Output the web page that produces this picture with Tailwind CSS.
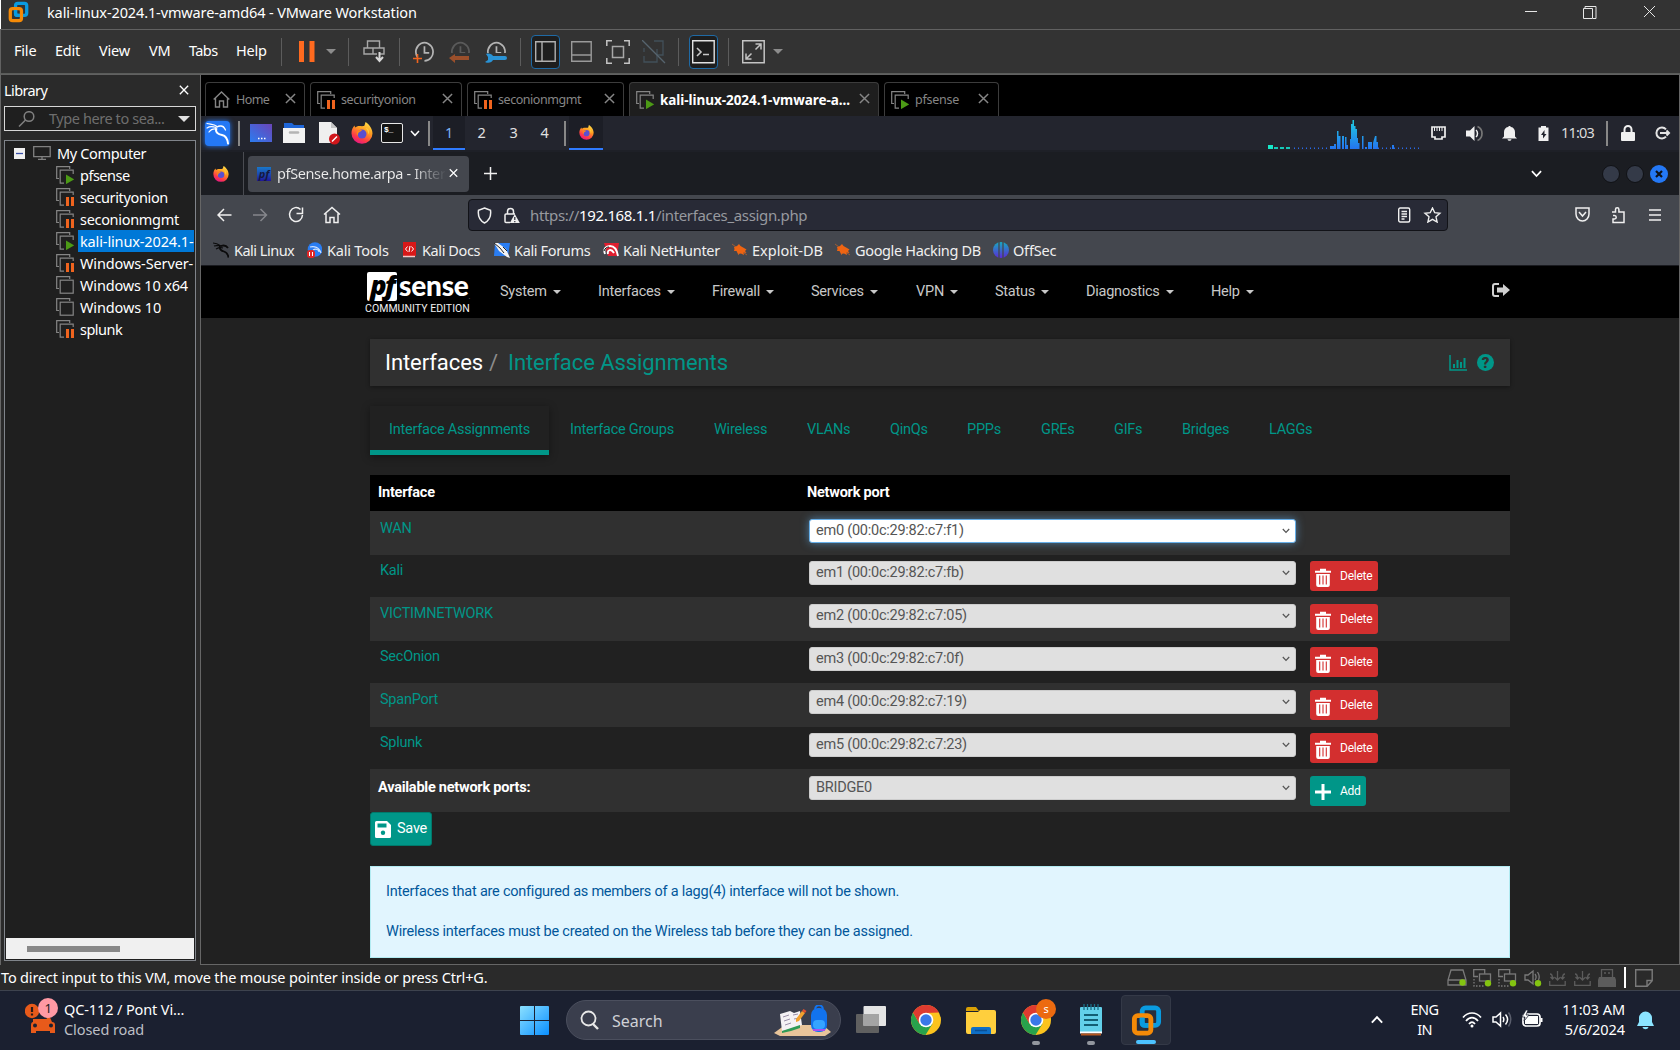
<!DOCTYPE html>
<html lang="en">
<head>
<meta charset="utf-8">
<title>kali-linux-2024.1-vmware-amd64 - VMware Workstation</title>
<script src="https://cdn.jsdelivr.net/npm/@tailwindcss/browser@4"></script>
</head>
<body class="h-[1050px] w-[1680px] overflow-hidden whitespace-nowrap bg-[#2a2a2a] font-['Noto_Sans',sans-serif] text-[14.5px] tracking-[-0.2px] text-white">

<!-- shared symbols -->
<svg class="absolute h-0 w-0">
  <defs>
    <linearGradient id="ffg" x1="0.8" y1="0" x2="0.3" y2="1"><stop offset="0" stop-color="#ffe34a"/><stop offset=".4" stop-color="#ff9a1f"/><stop offset=".75" stop-color="#ff3b47"/><stop offset="1" stop-color="#e31587"/></linearGradient>
    <linearGradient id="wing" x1="0" y1="0" x2="1" y2="1"><stop offset="0" stop-color="#8be0ff"/><stop offset="1" stop-color="#0a8fff"/></linearGradient>
    <linearGradient id="cpu" gradientUnits="userSpaceOnUse" x1="0" y1="2" x2="0" y2="32"><stop offset="0" stop-color="#1fd0e0"/><stop offset="1" stop-color="#2474f0"/></linearGradient>
    <linearGradient id="desk" x1="0" y1="1" x2="1" y2="0"><stop offset="0" stop-color="#2b7cf0"/><stop offset="1" stop-color="#6b45b8"/></linearGradient>
    <linearGradient id="off" x1="0" y1="0" x2="0" y2="1"><stop offset="0" stop-color="#18a9c0"/><stop offset="1" stop-color="#5a2bd6"/></linearGradient>
  </defs>
  <symbol id="vm-off" viewBox="0 0 18 18"><path d="M3 12.5H.7V.7h13V3" fill="none" stroke="#858585" stroke-width="1.2"/><rect x="4.2" y="4.2" width="13" height="13" fill="none" stroke="#858585" stroke-width="1.2"/></symbol>
  <symbol id="vm-pause" viewBox="0 0 18 18"><path d="M3 12.5H.7V.7h13V3M8 17.2H4.2v-13h13V7" fill="none" stroke="#858585" stroke-width="1.2"/><path d="M10 9h3v9h-3zM15 9h3v9h-3z" fill="#f0641e"/></symbol>
  <symbol id="vm-run" viewBox="0 0 18 18"><path d="M3 12.5H.7V.7h13V3M8 17.2H4.2v-13h13V8" fill="none" stroke="#858585" stroke-width="1.2"/><path d="M10 8.5l8.3 4.8-8.3 4.8z" fill="#4c9a16"/></symbol>
  <symbol id="firefox" viewBox="0 0 22 22"><path d="M14.5 0c3 2 7 6 7 11.5a10.5 10.3 0 0 1-21 0C.4 8 1.800 5 3.600 3.500L4 5.500c1-.8 3-1.500 4-1.500 1.500 0 5 .5 5.500-.5.5-1.200.5-2.300 1-3.500z" fill="url(#ffg)"/><circle cx="11" cy="12" r="4.500" fill="#5b4fd0"/><path d="M6 10c1-2 4-2 5-2-1 1.500-2 1.500-3.500 2.800C7 12 6.500 13 7 14c-1.500-1-1.500-3-1-4z" fill="#ff8a16"/><path d="M14.500 6c2 1.500 3 4 2.600 6.500 1-1 1.200-3 .5-4.500-.7-1.200-1.800-1.800-3.100-2z" fill="#ffd23a"/></symbol>
  <symbol id="vmw" viewBox="0 0 32 32"><rect x="11.500" y="3" width="17" height="18" rx="3.500" fill="none" stroke="#0a9be0" stroke-width="5"/><rect x="3.500" y="11" width="17" height="18" rx="3.500" fill="none" stroke="#f58a07" stroke-width="5"/><path d="M11.500 13v6a2 2 0 0 0 2 2h4" fill="none" stroke="#0a9be0" stroke-width="5"/></symbol>
  <symbol id="x" viewBox="0 0 12 12"><path d="M1 1l10 10M11 1L1 11" fill="none" stroke="currentColor" stroke-width="1.600"/></symbol>
  <symbol id="clock" viewBox="0 0 22 22"><path d="M4.800 16.500A9 9.500 0 1 1 12 20.300" fill="none" stroke="#b4b4b4" stroke-width="1.800"/><path d="M12 5v7h5" fill="none" stroke="#b4b4b4" stroke-width="1.800"/></symbol>
  <symbol id="net" viewBox="0 0 19 18"><path d="M5 7.500H.7V.7h11v4" fill="none" stroke="#7a7a7a" stroke-width="1.300"/><rect x="6.500" y="5" width="11" height="7" fill="none" stroke="#7a7a7a" stroke-width="1.300"/><path d="M1 10v7h11" fill="none" stroke="#7a7a7a" stroke-width="1.300" stroke-dasharray="1.500 1.500"/><circle cx="15" cy="14.300" r="3.200" fill="#84c411"/></symbol>
  <symbol id="dl" viewBox="0 0 17 16"><path d="M.7 11v4.300h15.500V11M8.500 1v9M6 7.500l2.500 2.500L11 7.500M1 4c2 0 2.500 1.500 2.500 4.500M16 4c-2 0-2.500 1.500-2.500 4.500M1.500 7l2 2 2-2M11.500 7l2 2 2-2" fill="none" stroke="#5c5c5c" stroke-width="1.300"/></symbol>
  <symbol id="chrome" viewBox="0 0 30 30"><circle cx="15" cy="15" r="15" fill="#fcc31e"/><path d="M2 7.500A15 15 0 0 0 14.500 30L21.500 18.800 15 15 8.500 18.700z" fill="#28a24c"/><path d="M2 7.500A15 15 0 0 1 28 7.500L15 8l-6.500 10.700z" fill="#de3b30"/><circle cx="15" cy="15" r="7.300" fill="#fff"/><circle cx="15" cy="15" r="5.700" fill="#3a78e8"/></symbol>
  <symbol id="caret" viewBox="0 0 10 5"><path d="M0 0h10L5 5z" fill="currentColor"/></symbol>
  <symbol id="chev" viewBox="0 0 10 7"><path d="M1 1l4 4.300L9 1" fill="none" stroke="currentColor" stroke-width="1.500"/></symbol>
  <symbol id="trash" viewBox="0 0 16 19"><path d="M0 2.800h5V.8h6v2h5v2H0zM1.200 6h13.600v11a2 2 0 0 1-2 2H3.200a2 2 0 0 1-2-2z" fill="#fff"/><path d="M4.700 7.500v9M8 7.500v9M11.300 7.500v9" stroke="#d32f2f" stroke-width="1.100"/></symbol>
  <symbol id="bug" viewBox="0 0 16 14"><path d="M2 4l3-1 2-2 1.500 2 3.500 2 2.500 1.500-1.500 1.500 1.500 2-3-.5.500 2.500-3-1.500-3 .5-1.500-3-2.500 0 .5-2z" fill="#ee6412"/><path d="M0 1l4 3M6 12l2-2M15 12l-3-2" stroke="#b5622e" stroke-width=".8"/></symbol>
</svg>

<div class="flex h-[1050px] flex-col *:shrink-0">

  <!-- title bar -->
  <header class="flex h-[29px] items-start border-l border-white bg-[#333333] pl-[7px] *:shrink-0">
    <svg class="mt-[1px] mr-[18px] h-[22px] w-[21px]"><use href="#vmw"/></svg>
    <div class="w-[1478px] leading-[25px] tracking-[-0.120px]">kali-linux-2024.1-vmware-amd64 - VMware Workstation</div>
    <svg class="mt-[5px] h-[14px] w-[132px]" viewBox="0 0 132 14" fill="none" stroke="#e6e6e6"><path d="M0 6.500h12M60 3.500V1.500h11v12h-3M58.500 3.500h9v10h-9zM119 1l11 11M130 1l-11 11"/></svg>
  </header>

  <!-- menu and toolbar -->
  <nav class="flex h-[46px] items-center border-t border-b border-l border-[#616161] bg-[#333333] pb-px *:shrink-0 shadow-[inset_0_-1px_0_#5a5c5a]">
    <div class="flex w-[280px] pl-[13px] *:shrink-0 pb-[2px]"><span class="w-[41px]">File</span><span class="w-[44px]">Edit</span><span class="w-[50px]">View</span><span class="w-[40px]">VM</span><span class="w-[47px] tracking-[-0.6px]">Tabs</span><span>Help</span></div>
    <div class="mr-[17px] h-[28px] w-px bg-[#5c5c5c]"></div>
    <svg class="mr-[11px] h-[21px] w-[16px]"><path d="M0 0h5v21H0zM10.500 0h5v21h-5z" fill="#ff6a1f"/></svg>
    <svg class="mr-[12px] h-[5px] w-[10px] text-[#8c8c8c]"><use href="#caret"/></svg>
    <div class="mr-[14px] h-[28px] w-px bg-[#5c5c5c]"></div>
    <svg class="mr-[14px] h-[23px] w-[22px]" fill="none" stroke="#a8a8a8" stroke-width="1.400"><path d="M4.500 8V1h12v7M1 8h9v6H1zM10 8h11v6h-5M10 8v6h4"/><path d="M16.500 12v8M13 17l3.500 4 3.500-4" stroke="#d8d8d8" stroke-width="2"/></svg>
    <div class="mr-[13px] h-[28px] w-px bg-[#5c5c5c]"></div>
    <div class="relative mr-[15px] h-[22px] w-[21px]"><svg class="h-[22px] w-[21px]"><use href="#clock"/></svg><svg class="absolute bottom-0 left-0 h-[9px] w-[9px]"><path d="M4.500 0v9M0 4.500h9" stroke="#f0641e" stroke-width="1.600"/></svg></div>
    <div class="relative mr-[15px] h-[22px] w-[21px]"><svg class="h-[22px] w-[21px] opacity-30"><use href="#clock"/></svg><svg class="absolute bottom-0 left-0 h-[10px] w-[21px]"><rect width="21" height="10" fill="#333"/><path d="M6 1v2h14v4H6v3L0 5z" fill="#9a4f2b"/></svg></div>
    <div class="relative mr-[13px] h-[22px] w-[22px]"><svg class="h-[22px] w-[21px]"><use href="#clock"/></svg><svg class="absolute bottom-0 left-0 h-[10px] w-[22px]"><rect width="22" height="10" fill="#333"/><path d="M1 1c3-1 6 0 7 2h12a2 2 0 0 1 0 4H8C7 9 4 11 0 9l3-2V4z" fill="#2a93d5"/></svg></div>
    <div class="mr-[10px] h-[28px] w-px bg-[#5c5c5c]"></div>
    <div class="mr-[11px] flex h-[34px] w-[29px] items-center justify-center rounded-sm border border-[#1f6aa5] bg-[#1e1e1e]"><svg class="h-[21px] w-[21px]" fill="none" stroke="#b0b0b0" stroke-width="1.400"><path d="M.7.700h19.500v19.500H.7zM7 1v19"/></svg></div>
    <svg class="mr-[14px] h-[21px] w-[21px]" fill="none" stroke="#9a9a9a" stroke-width="1.400"><path d="M.7.700h19.500v19.500H.7zM1 14h19"/></svg>
    <svg class="mr-[12px] h-[24px] w-[24px]" fill="none" stroke="#c4c4c4" stroke-width="1.500"><path d="M6.500 6.500h11v11h-11z" stroke="#a8a8a8"/><path d="M.8 6V.8H6M18 .8h5.200V6M23.200 18v5.200H18M6 23.200H.8V18"/></svg>
    <svg class="mr-[12px] h-[24px] w-[24px]" fill="none" stroke="#42505a" stroke-width="1.300"><path d="M12 1h9v14h-6M2 12V8M2 16v6h13V9"/><path d="M0 0l23 23" stroke="#56646e"/></svg>
    <div class="mr-[10px] h-[28px] w-px bg-[#5c5c5c]"></div>
    <div class="mr-[10px] flex h-[34px] w-[29px] items-center justify-center rounded-sm border border-[#1f6aa5] bg-[#1e1e1e]"><svg class="h-[24px] w-[23px]" fill="none" stroke="#e2e2e2" stroke-width="1.400"><path d="M.7.700h21.500v22H.7z"/><path d="M5 8l4 4-4 4M11 14.500h6" stroke="#c8c8c8" stroke-width="1.600"/></svg></div>
    <div class="mr-[13px] h-[28px] w-px bg-[#5c5c5c]"></div>
    <svg class="mr-[8px] h-[24px] w-[23px]" fill="none" stroke="#c4c4c4" stroke-width="1.500"><path d="M.7.700h21.500v22H.7zM4 19l5.500-5.500M13.500 9.500L19 4M13.500 4H19v5.500M4 13.500V19h5.500"/></svg>
    <svg class="h-[5px] w-[10px] text-[#8c8c8c]"><use href="#caret"/></svg>
  </nav>

  <div class="flex h-[890px] *:shrink-0">
    <!-- library -->
    <aside class="w-[201px] border-r border-l border-[#666] bg-[#2a2a2a]">
      <div class="flex h-[31px] items-start justify-between pr-[11px] pl-[3px] leading-[30px]"><span class="tracking-[-0.6px]">Library</span><svg class="mt-[10px] h-[10px] w-[10px]"><use href="#x"/></svg></div>
      <div class="ml-[3px] flex h-[25px] w-[192px] items-center border border-[#d8d8d8] bg-[#1f1f1f] *:shrink-0"><svg class="mr-[14px] ml-[13px] h-[16px] w-[17px]" fill="none" stroke="#808080" stroke-width="1.500"><circle cx="11" cy="5.500" r="4.800"/><path d="M7.500 9L1 15.500"/></svg><span class="w-[129px] tracking-[-0.420px] text-[#6e6e6e]">Type here to sea...</span><svg class="h-[6px] w-[12px] text-[#e0e0e0]" viewBox="0 0 10 5" preserveAspectRatio="none"><use href="#caret"/></svg></div>
      <div class="mt-[9px] ml-[3px] flex h-[821px] w-[192px] flex-col justify-between border border-[#80848a] bg-[#1f1f1f] p-px">
        <div class="leading-[22px] *:flex *:h-[22px] *:items-center">
          <div class="pl-[8px]"><svg class="mr-[8px] h-[11px] w-[11px]"><rect width="11" height="11" fill="#f0f0f0"/><path d="M2 5.500h7" stroke="#3a4fa8" stroke-width="1.300"/></svg><svg class="mr-[6px] h-[14px] w-[18px]" fill="none" stroke="#808080" stroke-width="1.300"><path d="M.7.700h16.500v10H.7zM9 11v2M5 13.300h8"/></svg><span class="tracking-[-0.350px]">My Computer</span></div>
          <div class="pl-[50px]"><svg class="mr-[4px] h-[18px] w-[18px]"><use href="#vm-run"/></svg><span class="px-[2px] tracking-[-0.500px]">pfsense</span></div>
          <div class="pl-[50px]"><svg class="mr-[4px] h-[18px] w-[18px]"><use href="#vm-pause"/></svg><span class="px-[2px] tracking-[-0.360px]">securityonion</span></div>
          <div class="pl-[50px]"><svg class="mr-[4px] h-[18px] w-[18px]"><use href="#vm-pause"/></svg><span class="px-[2px] tracking-[-0.310px]">seconionmgmt</span></div>
          <div class="pl-[50px]"><svg class="mr-[4px] h-[18px] w-[18px] shrink-0"><use href="#vm-run"/></svg><span class="h-[22px] w-[116px] shrink-0 bg-[#0078d7] px-[2px] tracking-[-0.130px]">kali-linux-2024.1-</span></div>
          <div class="pl-[50px]"><svg class="mr-[4px] h-[18px] w-[18px] shrink-0"><use href="#vm-pause"/></svg><span class="px-[2px] tracking-[-0.120px]">Windows-Server-</span></div>
          <div class="pl-[50px]"><svg class="mr-[4px] h-[18px] w-[18px]"><use href="#vm-off"/></svg><span class="px-[2px] tracking-[-0.170px]">Windows 10 x64</span></div>
          <div class="pl-[50px]"><svg class="mr-[4px] h-[18px] w-[18px]"><use href="#vm-off"/></svg><span class="px-[2px] tracking-[-0.120px]">Windows 10</span></div>
          <div class="pl-[50px]"><svg class="mr-[4px] h-[18px] w-[18px]"><use href="#vm-pause"/></svg><span class="px-[2px] tracking-[-0.500px]">splunk</span></div>
        </div>
        <div class="flex h-[21px] items-center bg-[#f0f0f0] pl-[21px]"><div class="h-[6px] w-[93px] bg-[#888888]"></div></div>
      </div>
    </aside>

    <main class="flex w-[1479px] flex-col border-r border-b border-[#666] *:shrink-0">
      <!-- VM tabs -->
      <div class="flex h-[41px] items-end bg-black pl-[4px] text-[12.500px] text-[#868686] *:flex *:h-[34px] *:shrink-0 *:items-center *:rounded-t *:border *:border-b-0 *:border-[#3c3c3c]">
        <div class="mr-[5px] w-[100px] pl-[7px] *:shrink-0"><svg class="h-[17px] w-[17px]" fill="none" stroke="#858585" stroke-width="1.400"><path d="M.7 8.500L8.500 1l7.800 7.500M2.500 7v9h4v-6h4v6h4V7"/></svg><span class="w-[55px] pt-px pl-[6px] tracking-[-0.600px]">Home</span><svg class="mb-[3px] h-[11px] w-[11px]"><use href="#x"/></svg></div>
        <div class="mr-[5px] w-[152px] pl-[6px] *:shrink-0"><svg class="h-[18px] w-[18px]"><use href="#vm-pause"/></svg><span class="w-[107px] pt-px pl-[6px] tracking-[-0.400px]">securityonion</span><svg class="mb-[3px] h-[11px] w-[11px]"><use href="#x"/></svg></div>
        <div class="mr-[5px] w-[157px] pl-[6px] *:shrink-0"><svg class="h-[18px] w-[18px]"><use href="#vm-pause"/></svg><span class="w-[112px] pt-px pl-[6px] tracking-[-0.450px]">seconionmgmt</span><svg class="mb-[3px] h-[11px] w-[11px]"><use href="#x"/></svg></div>
        <div class="mr-[5px] w-[250px] bg-[#1e1e1e] pl-[6px] *:shrink-0"><svg class="h-[18px] w-[18px]"><use href="#vm-run"/></svg><span class="w-[205px] pt-px pl-[6px] text-[13.500px] font-bold tracking-[-0.050px] text-white">kali-linux-2024.1-vmware-a...</span><svg class="mb-[3px] h-[11px] w-[11px]"><use href="#x"/></svg></div>
        <div class="w-[115px] pl-[6px] *:shrink-0"><svg class="h-[18px] w-[18px]"><use href="#vm-run"/></svg><span class="w-[69px] pt-px pl-[6px] tracking-[-0.250px]">pfsense</span><svg class="mb-[3px] h-[11px] w-[11px]"><use href="#x"/></svg></div>
      </div>

      <!-- guest desktop panel -->
      <div class="flex h-[36px] items-center border-b-2 border-[#1e2027] bg-[#23252e] pl-[4px] *:shrink-0">
        <div class="mr-[8px] flex h-[25px] w-[25px] items-center justify-center rounded-sm bg-[#2478f5] shadow-[0_0_5px_#2478f5]"><svg class="h-[23px] w-[23px]" fill="none" stroke="#fff" stroke-linecap="round"><path d="M1 1.500c4 1 7 .5 10 3M1 6c3-2 6-1.500 9-.5M3 10c2-3 5-3.500 8-3" stroke-width="1.200"/><path d="M10 7c-.5 4 3 5.500 6 6 3.500.8 5.500 3.500 6 8.500" stroke-width="2"/><path d="M11 5c3-2 7-1 8.500 3M15 4c2 0 3 1 4 3" stroke-width="1.300"/></svg></div>
        <div class="mr-[10px] h-[25px] w-[2px] bg-[#888]"></div>
        <svg class="mr-[11px] h-[18px] w-[22px]"><rect width="22" height="18" fill="url(#desk)"/><path d="M8 14.500h1.500M11 14.500h1.500M14 14.500h1.500" stroke="#fff" stroke-width="1.500"/></svg>
        <svg class="mr-[14px] h-[20px] w-[22px]"><path d="M1 0h8l2 2h10v6H1z" fill="#1f66d8"/><path d="M0 5h22v15H0z" fill="#f2f2f2"/><path d="M7 9.500h8" stroke="#b4b4b4" stroke-width="2.500" stroke-linecap="round"/></svg>
        <svg class="mr-[10px] h-[23px] w-[22px]"><path d="M0 0h12l6 6v15H0z" fill="#efefef"/><path d="M12 0v6h6z" fill="#c4c4c4"/><circle cx="15.500" cy="17" r="5.500" fill="#d0161b"/><path d="M13 19.500l5-5" stroke="#fff" stroke-width="1.500"/></svg>
        <svg class="mr-[8px] h-[22px] w-[22px]"><use href="#firefox"/></svg>
        <div class="mr-[7px] h-[20px] w-[22px] rounded-[2px] border border-[#e8e8e8] bg-[#141414] pl-[2px] font-['Liberation_Mono',monospace] text-[8px] leading-[11px] font-bold">$_</div>
        <svg class="mr-[8px] h-[7px] w-[10px]"><use href="#chev"/></svg>
        <div class="mr-[3px] h-[25px] w-[2px] bg-[#888]"></div>
        <div class="flex text-center leading-[32px] text-[#e0e0e0] *:h-[34px]"><span class="w-[32px] border-b-2 border-[#2f7bff] bg-[#1c1e26] text-[#7db2f5]">1</span><span class="w-[33px]">2</span><span class="w-[31px]">3</span><span class="w-[31px]">4</span></div>
        <div class="mr-[3px] ml-[4px] h-[25px] w-[2px] bg-[#888]"></div>
        <div class="mr-[665px] flex h-[34px] w-[34px] items-center justify-center border-b-2 border-[#2f7bff] bg-[#1c1e26]"><svg class="h-[15px] w-[15px]"><use href="#firefox"/></svg></div>
        <svg class="mr-[11px] h-[32px] w-[152px]"><path d="M0 30h5" stroke="#16e8c8" stroke-width="4"/><path d="M6 31h16" stroke="#16c8b8" stroke-width="2" stroke-dasharray="4 2"/><path d="M26 31.200h34M110 31.200h42" stroke="#2a6ae8" stroke-width="1.500" stroke-dasharray="1 3"/><path d="M62 32v-3h4v-2h2v5zM69 32V14h1.500v5h2v13zM74 32V19h2v13zM77 32V20h1.500v8H80v4zM82 32v-10h1V7h1.500V3H86v6h1.500v3H89v9h1v5h1.500v6zM94 32V19h1.500v13zM100 32v-7h4v7zM105 32v-6l2-7h1.500v6h1.500v7zM124 32v-4h2v4zM97 32v-2h2v2z" fill="url(#cpu)"/></svg>
        <svg class="mr-[20px] h-[14px] w-[15px]"><path d="M1 1h13v10h-3v2H4v-2H1z" fill="none" stroke="#f0f0f0" stroke-width="1.700"/><path d="M3.500 1v4M6 1v4M8.500 1v4M11 1v4" stroke="#f0f0f0"/></svg>
        <svg class="mr-[19px] h-[17px] w-[17px]"><path d="M0 5.500h4L8.500 1v15L4 11.500H0z" fill="#f0f0f0"/><path d="M10 5c2 1.500 2 5.500 0 7" fill="none" stroke="#f0f0f0" stroke-width="1.500"/><path d="M11.500 1.500c6 2.500 6 11.500 0 14" fill="none" stroke="#777" stroke-width="1.700"/></svg>
        <svg class="mr-[21px] h-[15px] w-[15px]"><path d="M0 12.500l2-2V6c0-3 2-5 4.500-5V0h2v1C11 1 13 3 13 6v4.500l2 2zM5.500 13.300h4c-.5 2-3.500 2-4 0z" fill="#f0f0f0"/></svg>
        <svg class="mr-[12px] h-[15px] w-[11px]"><path d="M3 0h5v1.500h2.500V15h-10V1.500H3z" fill="#f0f0f0"/><path d="M6.500 4L3 9h2v3.500L8.500 8h-2z" fill="#23252e"/></svg>
        <span class="w-[45px] tracking-[-0.800px] text-[#dcdcdc]">11:03</span>
        <div class="mr-[13px] h-[25px] w-[2px] bg-[#888]"></div>
        <svg class="mr-[20px] h-[16px] w-[14px]"><rect y="7" width="14" height="9" rx="1" fill="#f0f0f0"/><path d="M3.500 8V4.500a3.500 3.500 0 0 1 7 0V8" fill="none" stroke="#f0f0f0" stroke-width="2"/></svg>
        <svg class="h-[14px] w-[16px]" fill="none" stroke="#e4e4e4" stroke-width="2"><path d="M11 3.300a5.500 5.500 0 1 0 0 7.400M5 7h9M11.500 4.500L14 7l-2.500 2.500"/></svg>
      </div>

      <!-- browser tab strip -->
      <div class="flex h-[43px] items-center bg-[#1b1d22] pl-[12px] *:shrink-0">
        <svg class="mr-[14px] h-[16px] w-[16px]"><use href="#firefox"/></svg>
        <div class="mr-[4px] h-[43px] w-px bg-[#4a4c52]"></div>
        <div class="mr-[15px] flex h-[36px] w-[221px] items-center rounded bg-[#44474e] pl-[9px] *:shrink-0">
          <div class="mr-[6px] h-[14px] w-[14px] bg-linear-to-b from-[#1877c9] to-[#20129a] text-center text-[11px] leading-[13px] font-bold italic text-[#15183f]">pf</div>
          <span class="mr-[4px] w-[168px] bg-linear-to-r from-[#ececec] from-80% to-[#4a4d54] bg-clip-text tracking-[-0.380px] text-transparent">pfSense.home.arpa - Inter</span>
          <svg class="mb-[2px] h-[10px] w-[9px]"><use href="#x"/></svg>
        </div>
        <svg class="h-[13px] w-[13px]"><path d="M6.500 0v13M0 6.500h13" stroke="#f0f0f0" stroke-width="1.500"/></svg>
        <svg class="mr-[59px] ml-auto h-[8px] w-[13px]"><use href="#chev"/></svg>
        <div class="flex gap-[6px] pr-[11px] *:h-[18px] *:w-[18px] *:rounded-full"><div class="border border-[#101115] bg-[#343a48]"></div><div class="border border-[#101115] bg-[#343a48]"></div><div class="flex items-center justify-center bg-[#2478f5] text-[#0e1118]"><svg class="h-[8px] w-[8px]" viewBox="0 0 8 8"><path d="M1 1l6 6M7 1L1 7" stroke="currentColor" stroke-width="2.200"/></svg></div></div>
      </div>

      <!-- navigation toolbar -->
      <div class="flex h-[40px] items-center bg-[#44474e] pl-[16px] *:shrink-0">
        <svg class="h-[18px] w-[124px]" fill="none" stroke="#f0f0f0" stroke-width="1.500"><path d="M14.500 9H1M7 3L1 9l6 6"/><path d="M36 9h13.500M43.500 3l6 6-6 6" stroke="#85878c"/><path d="M83.500 3.500A6.500 7 0 1 0 85.500 9M79.500 7.500h6V1.500"/><path d="M107 8.500L115 1.500l8 7M109 7.500v9h4v-5h4v5h4v-9"/></svg>
        <div class="ml-[127px] flex h-[32px] w-[980px] items-center rounded border border-[#121318] bg-[#282a36] pl-[8px] *:shrink-0">
          <svg class="mr-[12px] h-[17px] w-[15px]"><path d="M7.500 1l6 2.300c.8 6-1.500 10.500-6 12.700C3 13.800.7 9.300 1.500 3.300z" fill="none" stroke="#f0f0f0" stroke-width="1.500"/></svg>
          <svg class="mr-[10px] h-[17px] w-[16px]"><path d="M3.500 7V4.500a3 3 0 0 1 6 0V7M6 15.500H2a1 1 0 0 1-1-1V8a1 1 0 0 1 1-1h9" fill="none" stroke="#f0f0f0" stroke-width="1.500"/><path d="M10.800 7l5 9h-10z" fill="#f0f0f0"/><path d="M10.800 10v3M10.800 14v1.200" stroke="#282a36" stroke-width="1.200"/></svg>
          <span class="w-[868px] text-[15px] tracking-[-0.340px] text-[#97999f]">https://<span class="text-white">192.168.1.1</span>/interfaces_assign.php</span>
          <svg class="h-[16px] w-[44px]" fill="none" stroke="#f0f0f0" stroke-width="1.400"><rect x=".7" y="1" width="11" height="14" rx="1.500"/><path d="M3.500 4.500h5.500M3.500 7h5.500M3.500 9.500h5.500M3.500 12h3"/><path d="M34.500 1l2.200 4.700 5.200.6-3.900 3.500 1.100 5.200-4.600-2.700-4.600 2.700 1.100-5.200L27 6.300l5.200-.6z"/></svg>
        </div>
        <svg class="ml-[127px] h-[18px] w-[88px]" fill="none" stroke="#f0f0f0" stroke-width="1.500"><path d="M1 2h13v6c0 4-3 7-6.500 7S1 12 1 8zM4 6l3.500 4L11 6"/><path d="M37 6h3.500V3.500a1.700 1.700 0 0 1 3.400 0V6H49v10.500H38v-3.500h1.500a1.700 1.700 0 0 0 0-3.500H38"/><path d="M74 4h12M74 9h12M74 14h12"/></svg>
      </div>

      <!-- bookmarks -->
      <div class="flex h-[31px] items-start border-b border-[#1a1b20] bg-[#44474e] pl-[12px] leading-[30px] text-[#f0f0f0] *:flex *:shrink-0 *:items-center">
        <div class="w-[94px] gap-[5px]"><svg class="h-[16px] w-[16px]" fill="none" stroke="#0b0b0c"><path d="M0 1c3 0 5 1 8 3M1 4c3-1 5 0 8 0M3 7c2-1 4-2 7-1" stroke-width="1.200"/><path d="M7 4c-1 4 2 5 4 5.500 3 1 4 3 4.500 6M8 4c3-1 5-1 7 2" stroke-width="1.800"/></svg><span class="tracking-[-0.500px]">Kali Linux</span></div>
        <div class="w-[96px] gap-[5px]"><svg class="h-[16px] w-[15px]"><circle cx="8" cy="7.500" r="7.300" fill="#2a7df2"/><path d="M3 5c4-1 9 0 11 6M6 8c3-2 6 0 6 2" stroke="#cfe2ff" fill="none" stroke-width="1.200"/><rect y="8" width="8" height="8" rx="3" fill="#e02525"/><path d="M2.500 10v4M5.500 10v4" stroke="#fff"/></svg><span>Kali Tools</span></div>
        <div class="w-[91px] gap-[6px]"><svg class="h-[16px] w-[13px]"><rect width="13" height="14" fill="#d81818"/><path d="M0 14.500h12" stroke="#f5caca" stroke-width="1.500"/><path d="M4.500 4.500L2.500 7l2 2.500M8.500 4.500l2 2.500-2 2.500M7 4L6 10" stroke="#fff" fill="none"/></svg><span class="tracking-[-0.400px]">Kali Docs</span></div>
        <div class="w-[109px] gap-[4px]"><svg class="h-[16px] w-[16px]"><path d="M1 1h15l-2 13H0z" fill="#2a7df2"/><path d="M0 1l4 0 8 6 4 9-3-1-4-3-4-3z" fill="#f4f4f4"/><path d="M0 1l6 5 4 5M9 5l4 4" stroke="#222" fill="none"/></svg><span class="tracking-[-0.350px]">Kali Forums</span></div>
        <div class="w-[129px] gap-[4px]"><svg class="h-[16px] w-[16px]"><path d="M1 1h15l-2 13H5z" fill="#e01f30"/><path d="M2 12c-2-5 1-8 5-8s7 4 8 10M5 12c-1-4 3-6 6-1" stroke="#fff" fill="none" stroke-width="1.900"/><path d="M1 9c1-3 3-4 5-4" stroke="#111" fill="none"/></svg><span class="tracking-[-0.280px]">Kali NetHunter</span></div>
        <div class="w-[103px] gap-[4px]"><svg class="h-[14px] w-[16px]"><use href="#bug"/></svg><span class="tracking-[0.020px]">Exploit-DB</span></div>
        <div class="w-[158px] gap-[4px]"><svg class="h-[14px] w-[16px]"><use href="#bug"/></svg><span class="tracking-[-0.350px]">Google Hacking DB</span></div>
        <div class="gap-[4px]"><svg class="h-[16px] w-[16px]"><circle cx="8" cy="8" r="8" fill="url(#off)"/><path d="M6 0v16M10 0v16" stroke="#44474e" stroke-width="1.300"/></svg><span>OffSec</span></div>
      </div>

      <!-- pfSense navbar -->
      <div class="flex h-[52px] bg-black pl-[164px] font-['Roboto',sans-serif] tracking-[-0.240px] text-[#c8c8c8] *:shrink-0">
        <div class="w-[135px] pt-[5px]">
          <div class="flex h-[30px] items-end pl-[2px] text-white"><div class="flex h-[29px] w-[30px] items-center justify-center rounded-[2px] bg-white pb-[4px] font-['Open_Sans',sans-serif] text-[27px] leading-[27px] font-extrabold tracking-[-2px] text-black italic">pf</div><span class="pl-[2px] font-['Lato',sans-serif] text-[28px] leading-[32px] font-black tracking-[-0.200px]">sense</span><span class="text-[5px]">.</span></div>
          <div class="pt-px text-[10.500px] leading-[14px] text-[#f0f0f0]"><span class="tracking-[0.050px]">COMMUNITY EDITION</span></div>
        </div>
        <div class="flex leading-[48px] *:flex *:shrink-0 *:items-center *:gap-[6px]">
          <div class="w-[98px]">System<svg class="h-[4px] w-[8px]"><use href="#caret"/></svg></div>
          <div class="w-[114px]">Interfaces<svg class="h-[4px] w-[8px]"><use href="#caret"/></svg></div>
          <div class="w-[99px]">Firewall<svg class="h-[4px] w-[8px]"><use href="#caret"/></svg></div>
          <div class="w-[105px]">Services<svg class="h-[4px] w-[8px]"><use href="#caret"/></svg></div>
          <div class="w-[79px]">VPN<svg class="h-[4px] w-[8px]"><use href="#caret"/></svg></div>
          <div class="w-[91px]">Status<svg class="h-[4px] w-[8px]"><use href="#caret"/></svg></div>
          <div class="w-[125px]">Diagnostics<svg class="h-[4px] w-[8px]"><use href="#caret"/></svg></div>
          <div class="w-[281px]">Help<svg class="h-[4px] w-[8px]"><use href="#caret"/></svg></div>
        </div>
        <svg class="mt-[17px] h-[14px] w-[18px]"><path d="M7 1H3a2 2 0 0 0-2 2v8a2 2 0 0 0 2 2h4" fill="none" stroke="#d0d0d0" stroke-width="2"/><path d="M5 4.500h6V1l7 6-7 6V9.500H5z" fill="#d0d0d0"/></svg>
      </div>

      <!-- page -->
      <div class="flex h-[646px] flex-col bg-[#212121] pr-[169px] pl-[169px] font-['Roboto',sans-serif] tracking-[-0.240px] *:shrink-0">
        <div class="mt-[21px] flex h-[47px] items-center bg-[#303030] pl-[15px] text-[22px] leading-[47px] tracking-[-0.070px] shadow-[0_1px_4px_rgba(0,0,0,0.4)] *:shrink-0">
          <span class="w-[104px]">Interfaces</span><span class="w-[19px] text-[#8c8c8c]">/</span><span class="w-[941px] text-[#009688]">Interface Assignments</span>
          <svg class="mr-[10px] h-[16px] w-[18px]" stroke="#009688" fill="none"><path d="M1 0v15h17" stroke-width="1.500"/><path d="M5 13V9M8.500 13V5M12 13V7M15.500 13V3" stroke-width="2"/></svg>
          <div class="h-[17px] w-[17px] rounded-full bg-[#009688] text-center text-[15px] leading-[18px] font-black text-[#303030]">?</div>
        </div>
        <div class="mt-[20px] flex h-[49px] leading-[48px] text-[#009688] *:shrink-0">
          <div class="mr-[21px] h-[49px] w-[179px] border-b-5 border-[#009688] pl-[19px] shadow-[0_2px_8px_rgba(0,0,0,0.4)]">Interface Assignments</div><div class="w-[144px]">Interface Groups</div><div class="w-[93px]">Wireless</div><div class="w-[83px]">VLANs</div><div class="w-[77px]">QinQs</div><div class="w-[74px]">PPPs</div><div class="w-[73px]">GREs</div><div class="w-[68px]">GIFs</div><div class="w-[87px]">Bridges</div><div>LAGGs</div>
        </div>
        <div class="mt-[20px] grid h-[36px] grid-cols-[429px_1fr] bg-black pl-[8px] leading-[35px] font-bold"><span>Interface</span><span>Network port</span></div>

        <div class="flex flex-col text-[#009688] *:shrink-0">
          <div class="flex h-[44px] bg-[#303030] pt-[8px] pl-[10px] *:shrink-0"><span class="w-[429px] leading-[19px]">WAN</span><div class="flex h-[24px] w-[487px] items-center justify-between rounded-[3px] border border-[#66afe9] bg-white pr-[5px] pl-[6px] leading-[20px] text-[#555] shadow-[0_0_8px_rgba(102,175,233,0.6)]"><span class="pb-px">em0 (00:0c:29:82:c7:f1)</span><svg class="h-[6px] w-[8px]"><use href="#chev"/></svg></div></div>
          <div class="flex h-[42px] pt-[6px] pl-[10px] *:shrink-0"><span class="w-[429px] leading-[19px]">Kali</span><div class="mr-[14px] flex h-[24px] w-[487px] items-center justify-between rounded-[3px] border border-[#ccc] bg-[#e0e0e0] pr-[5px] pl-[6px] leading-[20px] text-[#555]"><span class="pb-px">em1 (00:0c:29:82:c7:fb)</span><svg class="h-[6px] w-[8px]"><use href="#chev"/></svg></div><div class="flex h-[30px] w-[68px] rounded-[3px] bg-[#d32f2f] pt-[7px] pl-[5px] text-[12px] leading-[16px] text-white *:shrink-0"><svg class="mr-[9px] h-[19px] w-[16px]"><use href="#trash"/></svg>Delete</div></div>
          <div class="flex h-[44px] bg-[#303030] pt-[7px] pl-[10px] *:shrink-0"><span class="w-[429px] leading-[19px]">VICTIMNETWORK</span><div class="mr-[14px] flex h-[24px] w-[487px] items-center justify-between rounded-[3px] border border-[#ccc] bg-[#e0e0e0] pr-[5px] pl-[6px] leading-[20px] text-[#555]"><span class="pb-px">em2 (00:0c:29:82:c7:05)</span><svg class="h-[6px] w-[8px]"><use href="#chev"/></svg></div><div class="flex h-[30px] w-[68px] rounded-[3px] bg-[#d32f2f] pt-[7px] pl-[5px] text-[12px] leading-[16px] text-white *:shrink-0"><svg class="mr-[9px] h-[19px] w-[16px]"><use href="#trash"/></svg>Delete</div></div>
          <div class="flex h-[42px] pt-[6px] pl-[10px] *:shrink-0"><span class="w-[429px] leading-[19px]">SecOnion</span><div class="mr-[14px] flex h-[24px] w-[487px] items-center justify-between rounded-[3px] border border-[#ccc] bg-[#e0e0e0] pr-[5px] pl-[6px] leading-[20px] text-[#555]"><span class="pb-px">em3 (00:0c:29:82:c7:0f)</span><svg class="h-[6px] w-[8px]"><use href="#chev"/></svg></div><div class="flex h-[30px] w-[68px] rounded-[3px] bg-[#d32f2f] pt-[7px] pl-[5px] text-[12px] leading-[16px] text-white *:shrink-0"><svg class="mr-[9px] h-[19px] w-[16px]"><use href="#trash"/></svg>Delete</div></div>
          <div class="flex h-[44px] bg-[#303030] pt-[7px] pl-[10px] *:shrink-0"><span class="w-[429px] leading-[19px]">SpanPort</span><div class="mr-[14px] flex h-[24px] w-[487px] items-center justify-between rounded-[3px] border border-[#ccc] bg-[#e0e0e0] pr-[5px] pl-[6px] leading-[20px] text-[#555]"><span class="pb-px">em4 (00:0c:29:82:c7:19)</span><svg class="h-[6px] w-[8px]"><use href="#chev"/></svg></div><div class="flex h-[30px] w-[68px] rounded-[3px] bg-[#d32f2f] pt-[7px] pl-[5px] text-[12px] leading-[16px] text-white *:shrink-0"><svg class="mr-[9px] h-[19px] w-[16px]"><use href="#trash"/></svg>Delete</div></div>
          <div class="flex h-[42px] pt-[6px] pl-[10px] *:shrink-0"><span class="w-[429px] leading-[19px]">Splunk</span><div class="mr-[14px] flex h-[24px] w-[487px] items-center justify-between rounded-[3px] border border-[#ccc] bg-[#e0e0e0] pr-[5px] pl-[6px] leading-[20px] text-[#555]"><span class="pb-px">em5 (00:0c:29:82:c7:23)</span><svg class="h-[6px] w-[8px]"><use href="#chev"/></svg></div><div class="flex h-[30px] w-[68px] rounded-[3px] bg-[#d32f2f] pt-[7px] pl-[5px] text-[12px] leading-[16px] text-white *:shrink-0"><svg class="mr-[9px] h-[19px] w-[16px]"><use href="#trash"/></svg>Delete</div></div>
          <div class="flex h-[43px] bg-[#303030] pt-[7px] pl-[8px] *:shrink-0"><span class="w-[431px] leading-[23px] font-bold text-white">Available network ports:</span><div class="mr-[14px] flex h-[24px] w-[487px] items-center justify-between rounded-[3px] border border-[#ccc] bg-[#e0e0e0] pr-[5px] pl-[6px] leading-[20px] text-[#555]"><span class="pb-px">BRIDGE0</span><svg class="h-[6px] w-[8px]"><use href="#chev"/></svg></div><div class="flex h-[30px] w-[56px] rounded-[3px] bg-[#009688] pt-[7px] pl-[5px] text-[12px] leading-[16px] text-white *:shrink-0"><svg class="mt-px mr-[9px] h-[16px] w-[16px]"><path d="M8 0v16M0 8h16" stroke="#fff" stroke-width="3"/></svg>Add</div></div>
        </div>

        <div class="flex h-[34px] w-[62px] items-center rounded-[3px] border border-[#00796b] bg-[#009688] pl-[4px] leading-[30px] *:shrink-0"><svg class="mr-[6px] h-[17px] w-[16px]"><path d="M0 1.500A1.500 1.500 0 0 1 1.500 0H12l4 4v11.500a1.500 1.500 0 0 1-1.500 1.500h-13A1.500 1.500 0 0 1 0 15.500z" fill="#fff"/><path d="M2.500 2.500h9V6.500h-9z" fill="#009688"/><circle cx="8" cy="11.700" r="2.200" fill="#009688"/></svg><span class="pb-px">Save</span></div>
        <div class="mt-[20px] h-[92px] border border-[#b2ebf2] bg-[#e1f5fe] pt-[15px] pl-[15px] leading-[20px] tracking-[-0.235px] text-[#01579b]"><p>Interfaces that are configured as members of a lagg(4) interface will not be shown.</p><p class="mt-[20px]">Wireless interfaces must be created on the Wireless tab before they can be assigned.</p></div>
      </div>
    </main>
  </div>

  <!-- status bar -->
  <footer class="flex h-[26px] items-center border-b border-[#3e434e] bg-[#2a2a2a] pl-[1px] *:shrink-0">
    <span class="w-[1446px] pt-px tracking-[-0.170px]">To direct input to this VM, move the mouse pointer inside or press Ctrl+G.</span>
    <svg class="mr-[6px] h-[17px] w-[20px]"><path d="M4 1h12l3 10v5H1v-5zM1 11h18" fill="none" stroke="#7a7a7a" stroke-width="1.300"/><circle cx="15.500" cy="13.500" r="3.200" fill="#84c411"/></svg>
    <svg class="mr-[6px] h-[18px] w-[19px]"><use href="#net"/></svg>
    <svg class="mr-[7px] h-[18px] w-[19px]"><use href="#net"/></svg>
    <svg class="mr-[7px] h-[18px] w-[18px]" fill="none" stroke="#7a7a7a" stroke-width="1.300"><path d="M1 6h3l5-4v13l-5-4H1zM11 5c1.500 2 1.500 4 0 6M13.500 3c2 3 2 6 1 8"/><circle cx="14" cy="14.300" r="3.200" fill="#84c411" stroke="none"/></svg>
    <svg class="mr-[8px] h-[16px] w-[17px]"><use href="#dl"/></svg>
    <svg class="mr-[7px] h-[16px] w-[17px]"><use href="#dl"/></svg>
    <svg class="mr-[8px] h-[18px] w-[18px]"><path d="M3.500 8V.7h11V8" fill="none" stroke="#5c5c5c" stroke-width="1.300"/><path d="M6 4h2M10 4h2" stroke="#5c5c5c" stroke-width="1.500"/><path d="M1 8h16l1 3v7H0v-7z" fill="#5c5c5c"/></svg>
    <div class="mr-[9px] h-[21px] w-[2px] bg-white"></div>
    <svg class="h-[18px] w-[18px]"><path d="M.7.700h16.500v11l-5 5.500H.7zM17 11.500h-5V17" fill="none" stroke="#7a7a7a" stroke-width="1.400"/></svg>
  </footer>

  <!-- taskbar -->
  <div class="flex h-[59px] items-start bg-[#1b2030] pl-[25px] *:shrink-0">
    <div class="relative mr-[5px] h-[45px] w-[34px] pt-[12px]"><svg class="h-[32px] w-[34px]"><circle cx="7" cy="8" r="7.200" fill="#e85a1a"/><path d="M7 4v5M7 10.500v2" stroke="#2a1a18" stroke-width="2.200"/><path d="M8 16h14l-2-4h4l3 7c2 0 3 1 3 3v8h-5v-2H11v2H6v-8c0-2 1-3 2-3z" fill="#e85a1a"/><circle cx="10" cy="22.500" r="2" fill="#1b2030"/><circle cx="26" cy="22.500" r="2" fill="#1b2030"/></svg><span class="absolute top-[7px] left-[13px] h-[20px] w-[20px] rounded-full bg-[#ff99a4] text-center text-[13px] leading-[20px] text-[#222]">1</span></div>
    <div class="w-[456px] pt-[8px] leading-[20px]"><div class="tracking-[-0.120px]">QC-112 / Pont Vi...</div><div class="tracking-[-0.080px] text-[#bcbfc6]">Closed road</div></div>
    <svg class="mt-[15px] mr-[17px] h-[29px] w-[29px]" fill="url(#wing)"><path d="M0 1a1 1 0 0 1 1-1h13v14H0zM15 0h13a1 1 0 0 1 1 1v13H15zM0 15h14v14H1a1 1 0 0 1-1-1zM15 15h14v13a1 1 0 0 1-1 1H15z"/></svg>
    <div class="mt-[9px] mr-[15px] flex h-[40px] w-[275px] items-center rounded-full border border-[#4b4f5e] bg-[#3a3e4d] pl-[13px] *:shrink-0">
      <svg class="mr-[13px] h-[20px] w-[19px]" fill="none" stroke="#e8e8e8" stroke-width="1.800"><circle cx="8.500" cy="8.500" r="7"/><path d="M13 14l5 5" stroke-width="2.400"/></svg>
      <span class="w-[162px] pt-px text-[16px] tracking-normal text-[#cfd1d6]">Search</span>
      <svg class="h-[31px] w-[58px]"><path d="M0 28l11-8h38l8 7-6 4H6z" fill="#e8c49a"/><path d="M6 9l10-3 4 2 6-2 2 14-12 4-8 2z" fill="#f4f1f4"/><path d="M8 26l9-3 9-3v3l-9 3-9 2z" fill="#2f9a56"/><path d="M9 12l6-2M10 16l6-2M11 20l6-2M19 10l5-1M20 14l5-1" stroke="#9a8fa8"/><path d="M22 14l6-8 3 2-6 8-3 1z" fill="#f2a02e"/><path d="M28 6l1.500-2 3 2L31 8z" fill="#e2502e"/><rect x="37" y="3" width="16" height="24" rx="7" fill="#1273ee"/><path d="M41 4c1-5 7-5 8 0" fill="none" stroke="#1273ee" stroke-width="2"/><rect x="39" y="15" width="12" height="9" rx="4" fill="#35a4ff"/><path d="M39 25h12" stroke="#a64ff0" stroke-width="2"/></svg>
    </div>
    <svg class="mt-[15px] mr-[25px] h-[27px] w-[30px]"><rect y="8" width="23" height="19" rx="1" fill="#606060"/><rect x="7.500" width="22.500" height="20" rx="1" fill="#e4e4e4"/><path d="M7.500 8H23v12H7.500z" fill="#a4a4a4"/></svg>
    <svg class="mt-[14px] mr-[25px] h-[30px] w-[30px]"><use href="#chrome"/></svg>
    <svg class="mt-[16px] mr-[25px] h-[27px] w-[30px]"><path d="M0 2a2 2 0 0 1 2-2h8l3 4h-13z" fill="#d9a005"/><path d="M0 5h12l2-2h14a2 2 0 0 1 2 2v20a2 2 0 0 1-2 2H2a2 2 0 0 1-2-2z" fill="#ffcf3d"/><path d="M5 27v-5a2 2 0 0 1 2-2h16a2 2 0 0 1 2 2v5z" fill="#0f6fc6"/><path d="M9 23.500h12" stroke="#0a4f94" stroke-width="1.500"/></svg>
    <div class="relative mr-[29px] flex h-[54px] w-[30px] flex-col items-center justify-between pt-[14px]"><svg class="h-[30px] w-[30px]"><use href="#chrome"/></svg><div class="h-[4px] w-[8px] rounded-full bg-[#93979f]"></div><span class="absolute top-[8px] left-[15px] h-[20px] w-[20px] rounded-full bg-[#ec6a10] text-center text-[11px] leading-[20px]">s</span></div>
    <div class="mr-[19px] flex h-[54px] w-[22px] flex-col items-center justify-between pt-[13px]"><svg class="h-[32px] w-[22px]"><rect y="3" width="22" height="26" rx="1" fill="#62d0ea"/><path d="M4 0v6M7.500 0v6M11 0v6M14.500 0v6M18 0v6" stroke="#1a6f88" stroke-width="1.300"/><path d="M4 11h14M4 16h14M4 21h14" stroke="#135e74" stroke-width="2"/><path d="M0 28.500h22" stroke="#fff" stroke-width="2"/><path d="M1 30.500h20" stroke="#b5561e" stroke-width="2"/></svg><div class="h-[4px] w-[8px] rounded-full bg-[#93979f]"></div></div>
    <div class="mt-[4px] mr-[198px] flex h-[50px] w-[50px] flex-col items-center justify-between rounded border border-[#343947] bg-[#292e3c] pt-[9px]"><svg class="h-[31px] w-[31px]"><use href="#vmw"/></svg><div class="h-[4px] w-[20px] rounded-full bg-[#4cc2ff]"></div></div>
    <svg class="mt-[24px] ml-px h-[9px] w-[14px] rotate-180"><use href="#chev"/></svg>
    <div class="w-[81px] pt-[8px] text-center leading-[20px] tracking-[-0.600px]">ENG<br>IN</div>
    <svg class="mt-[20px] mr-[10px] -ml-[3px] h-[17px] w-[20px]" fill="none" stroke="#fff" stroke-width="1.700"><path d="M1 6.500c5-6 13-6 18 0M4 10c3.500-4.500 8.500-4.500 12 0M7 13c2-2.500 4-2.500 6 0"/><circle cx="10" cy="15" r="1.500" fill="#fff" stroke="none"/></svg>
    <svg class="mt-[20px] mr-[10px] h-[17px] w-[20px]" fill="none" stroke="#fff" stroke-width="1.500"><path d="M1 6h3l4.500-4v13L4 11H1zM11 6c1 1.500 1 3.500 0 5M13.500 3.500c2.500 3 2.500 7 0 10"/><path d="M16.500 1.500c3 4 3 10 0 14" stroke="#5a5e6c"/></svg>
    <svg class="mt-[19px] mr-[18px] h-[17px] w-[21px]"><rect x="1" y="4" width="17" height="12" rx="3" fill="none" stroke="#fff" stroke-width="1.700"/><path d="M6 6h10v8H3v-4z" fill="#fff"/><path d="M18.500 8v4h2V8z" fill="#fff"/><path d="M4 0L0 7h3l-1 4 5-6H4l2-5z" fill="#fff" stroke="#1b2030" stroke-width=".7"/></svg>
    <div class="w-[64px] pt-[8px] text-right leading-[20px] tracking-[-0.050px]">11:03 AM<br>5/6/2024</div>
    <svg class="mt-[20px] ml-[12px] h-[19px] w-[17px]"><path d="M0 15l2-4V7a6.500 6.500 0 0 1 13 0v4l2 4zM5.500 16h6c-.8 3-5.200 3-6 0z" fill="#8be4ff"/></svg>
  </div>
</div>
</body>
</html>
